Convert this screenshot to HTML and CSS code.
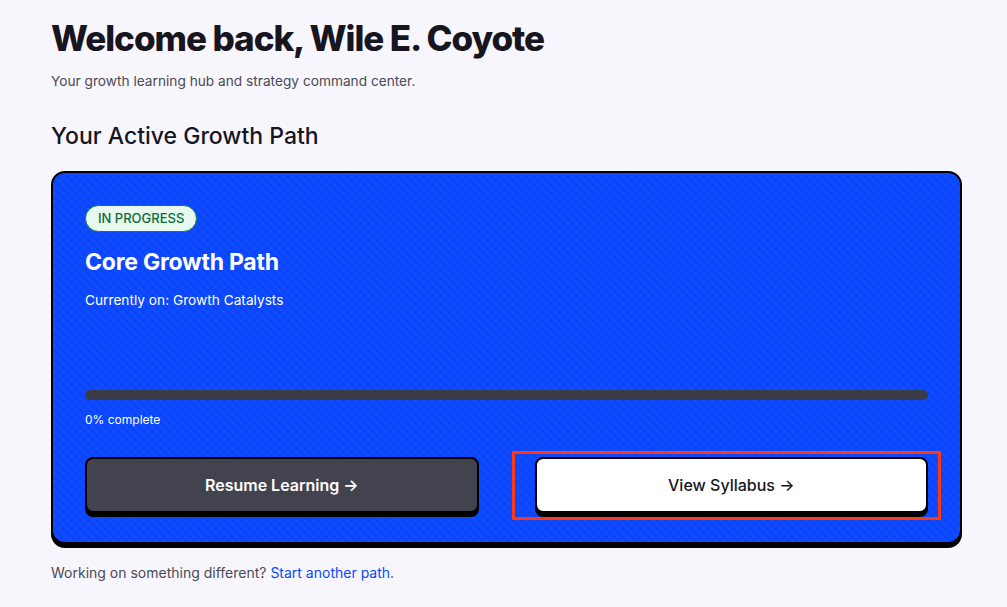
FILE: index.html
```html
<!DOCTYPE html>
<html lang="en">
<head>
	<meta charset="UTF-8">
	<title>Dashboard</title>
	<link rel="stylesheet" href="styles.css">
</head>
<body>
	<div class="page">
		<h1 class="title">Welcome back, Wile E. Coyote</h1>
		<p class="subtitle">Your growth learning hub and strategy command center.</p>

		<h2 class="section-title">Your Active Growth Path</h2>

		<div class="path-card">
			<span class="badge">IN PROGRESS</span>
			<h3 class="path-name">Core Growth Path</h3>
			<p class="path-current">Currently on: Growth Catalysts</p>

			<div class="progress"><div class="progress-fill" style="width: 0%"></div></div>
			<p class="progress-label">0% complete</p>

			<div class="actions">
				<a class="btn btn-dark" href="#">Resume Learning &rarr;</a>
				<div class="btn-wrap">
					<a class="btn btn-light" href="#">View Syllabus &rarr;</a>
					<span class="highlight"></span>
				</div>
			</div>
		</div>

		<p class="other">Working on something different? <a href="#">Start another path</a>.</p>
	</div>
</body>
</html>
```

FILE: styles.css
```css
*{
	margin: 0;
	padding: 0;
	box-sizing: border-box;
}
body{
	background: #f7f6fd;
	font-family: Inter, "Noto Sans", sans-serif;
	color: #17161f;
}
.page{
	width: 911px;
	margin-left: 51px;
	padding-top: 16px;
}
.title{
	font-size: 35px;
	font-weight: 800;
	letter-spacing: -0.03em;
	line-height: 44px;
	color: #17161f;
}
.subtitle{
	margin-top: 11px;
	font-size: 13.7px;
	line-height: 20px;
	color: #4a4a55;
}
.section-title{
	margin-top: 30px;
	font-size: 23px;
	font-weight: 500;
	line-height: 30px;
}
/* blue card with hard shadow */
.path-card{
	margin-top: 20px;
	width: 911px;
	padding: 32px 32px 29px;
	background-color: #0a47ff;
	background-image: repeating-linear-gradient(45deg, rgba(255,255,255,0.025) 0 3px, transparent 3px 6px),
		repeating-linear-gradient(-45deg, rgba(0,0,0,0.025) 0 3px, transparent 3px 6px);
	border: 2px solid #000;
	border-radius: 14px;
	box-shadow: 0 4px 0 #000;
	color: #fff;
	position: relative;
}
.badge{
	display: inline-block;
	padding: 0 12px;
	height: 27px;
	line-height: 25px;
	font-size: 13px;
	font-weight: 500;
	color: #0d6b3a;
	background: #e7f8ee;
	border: 1px solid #167a42;
	border-radius: 14px;
}
.path-name{
	margin-top: 15px;
	font-size: 23px;
	font-weight: 700;
	line-height: 30px;
	letter-spacing: -0.01em;
}
.path-current{
	margin-top: 13px;
	font-size: 13.7px;
	line-height: 20px;
}
.progress{
	margin-top: 80px;
	height: 10px;
	border-radius: 5px;
	background: #3b3c48;
	overflow: hidden;
}
.progress-fill{
	height: 100%;
	background: #22c55e;
}
.progress-label{
	margin-top: 12px;
	font-size: 12px;
	line-height: 16px;
}
.actions{
	margin-top: 29px;
	display: grid;
	grid-template-columns: 1fr 1fr;
	gap: 56px;
}
.btn{
	display: flex;
	align-items: center;
	justify-content: center;
	height: 56px;
	border: 2px solid #000;
	border-radius: 8px;
	box-shadow: 0 4px 0 #000;
	font-size: 16px;
	font-weight: 600;
	text-decoration: none;
}
.btn-dark{
	background: #42434f;
	color: #fff;
}
.btn-light{
	background: #fff;
	color: #17161f;
	font-weight: 500;
}
.btn-wrap{
	position: relative;
}
/* red focus marker round the syllabus button */
.highlight{
	position: absolute;
	left: -23px;
	top: -6px;
	right: -13px;
	bottom: -7px;
	border: 3px solid #ff3a12;
	pointer-events: none;
}
.other{
	margin-top: 19px;
	font-size: 14px;
	line-height: 20px;
	color: #4a4a55;
}
.other a{
	color: #0a47ff;
	text-decoration: none;
}
```
